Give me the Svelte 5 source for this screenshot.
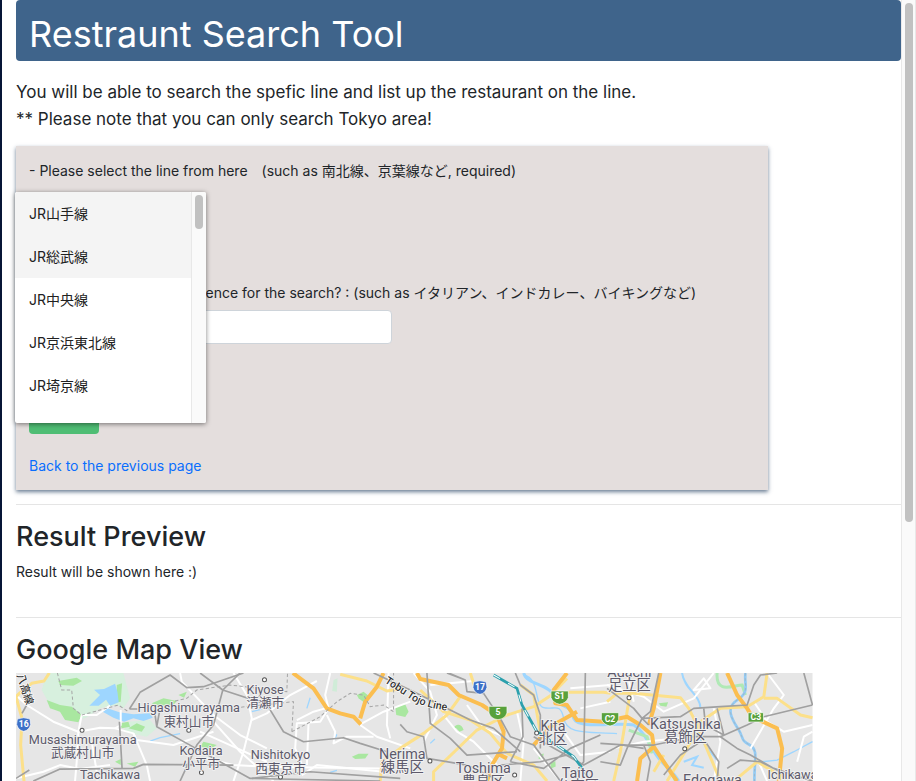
<script>
  const lines = [
    'JR山手線', 'JR総武線', 'JR中央線', 'JR京浜東北線', 'JR埼京線', 'JR横浜線', 'JR南武線',
    'JR青梅線', 'JR五日市線', 'JR八高線', 'JR常磐線', 'JR京葉線', 'JR武蔵野線', 'JR横須賀線',
    '東京メトロ銀座線', '東京メトロ丸ノ内線', '東京メトロ日比谷線', '東京メトロ東西線',
    '東京メトロ千代田線', '東京メトロ有楽町線', '東京メトロ半蔵門線', '東京メトロ南北線',
    '東京メトロ副都心線', '都営浅草線', '都営三田線', '都営新宿線', '都営大江戸線', '京王線',
    '小田急線', '東急東横線', '東急田園都市線', '西武新宿線', '西武池袋線', '東武東上線', '京成本線'
  ];
  let line = $state('');
  let keyword = $state('');

  const places = [
    { x: 248, y: 236, en: 'Musashimurayama', ja: '武蔵村山市', dot: [246, 196] },
    { x: 330, y: 342, en: 'Tachikawa', ja: '立川市', dot: [330, 400] },
    { x: 566, y: 142, en: 'Higashimurayama', ja: '東村山市', dot: [566, 196] },
    { x: 603, y: 269, en: 'Kodaira', ja: '小平市', dot: [604, 322] },
    { x: 795, y: 86, en: 'Kiyose', ja: '清瀬市', dot: [793, 44] },
    { x: 841, y: 283, en: 'Nishitokyo', ja: '西東京市', dot: [841, 336] },
    { x: 1206, y: 282, en: 'Nerima', ja: '練馬区', dot: [1289, 288], big: true },
    { x: 1449, y: 325, en: 'Toshima', ja: '豊島区', dot: [1543, 330], big: true },
    { x: 1658, y: 198, en: 'Kita', ja: '北区', dot: [1609, 204], big: true },
    { x: 1732, y: 338, en: 'Taito', ja: '台東区', dot: [1732, 420], big: true },
    { x: 1887, y: 36, en: 'Adachi', ja: '足立区', dot: [1886, 98], big: true },
    { x: 2055, y: 191, en: 'Katsushika', ja: '葛飾区', dot: [2053, 251], big: true },
    { x: 2136, y: 361, en: 'Edogawa', ja: '江戸川区', dot: [2136, 440], big: true },
    { x: 2376, y: 342, en: 'Ichikawa', ja: '市川市', dot: [2376, 420] }
  ];
</script>

<div class="page">
  <main>
    <header><h1>Restraunt Search Tool</h1></header>

    <p class="lead">
      You will be able to search the spefic line and list up the restaurant on the line.<br />
      ** Please note that you can only search Tokyo area!
    </p>

    <form class="card" onsubmit={(e) => e.preventDefault()}>
      <div class="field line-field">
        <label for="line">- Please select the line from here　(such as 南北線、京葉線など, required)</label>
        <div class="menu">
          <select id="line" size="5" bind:value={line} required>
            {#each lines as name, i}
              <option value={name} class:active={i < 2}>{name}</option>
            {/each}
          </select>
          <div class="track" aria-hidden="true"><div class="thumb short"></div></div>
        </div>
      </div>
      <div class="field">
        <label for="keyword">- Do you have some preference for the search? : (such as イタリアン、インドカレー、バイキングなど)</label>
        <input id="keyword" type="text" bind:value={keyword} />
      </div>
      <button type="submit">Search</button>
      <a href="#previous">Back to the previous page</a>
    </form>

    <section class="result">
      <h2>Result Preview</h2>
      <p>Result will be shown here :)</p>
    </section>

    <section>
      <h2>Google Map View</h2>
      <svg class="map" viewBox="48 24 2388 1350" role="img" aria-label="Map of Tokyo">
        <rect x="48" y="24" width="2388" height="1350" fill="#e6e6e6" />

        <g fill="#d7f0de">
          <path d="M140 24H370L390 100 370 130 350 120 300 130 255 160 215 165 150 120 125 75Z" />
          <path d="M385 170L450 165 470 190 440 215 370 200Z" />
        </g>
        <g fill="#a9e7a0">
          <path d="M175 48L230 38 246 48 220 62 180 60Z" />
          <path d="M350 60L366 55 362 110 350 112Z" />
          <path d="M140 105L180 120 215 125 245 150 235 172 195 165 180 140 150 130Z" />
          <path d="M455 115L490 100 530 108 520 120 470 122Z" />
          <path d="M535 90L560 80 552 98Z" />
          <path d="M360 175L385 170 390 185 365 190Z" />
          <path d="M385 190L410 175 435 185 425 200Z" />
          <path d="M345 290L362 282 362 300Z" />
          <path d="M380 295L415 290 405 305Z" />
          <path d="M610 230L650 240 630 252 600 244Z" />
          <path d="M1070 90L1090 80 1105 92 1095 115 1075 100Z" />
          <path d="M1185 125L1215 118 1225 140 1215 156 1188 150Z" />
          <path d="M1360 190C1365 175 1385 175 1390 195L1378 200 1368 190Z" />
          <path d="M1055 275L1075 266 1105 266 1095 280 1065 282Z" />
          <path d="M1000 45L1012 40 1010 80 996 78Z" fill="#d0ecd8" />
          <path d="M1615 270L1630 265 1628 280 1615 282Z" />
          <path d="M1650 296L1665 288 1666 304 1652 310Z" />
          <path d="M1975 115L2003 112 1998 125 1980 122Z" />
        </g>

        <g fill="#9ed6ff">
          <path d="M268 122L300 90 282 74 312 72 345 56 352 80 356 112 330 122 318 104 296 122Z" />
          <path d="M308 140L322 130 358 142 400 148 450 145 458 158 430 168 400 160 372 170 340 158Z" />
        </g>
        <g fill="none" stroke="#9ed6ff" stroke-width="4">
          <path d="M450 228L480 218 540 206" />
          <path d="M755 140L785 132M920 130L930 98M1000 230L1010 208M1290 235L1304 222M990 322L1010 316" />
          <path stroke-width="9" d="M1570 24C1580 60 1640 55 1660 90 1665 130 1710 110 1720 160 1735 195 1850 170 1900 180 1935 200 1950 250 1975 280 2000 310 2020 320 2035 348" />
          <path d="M1570 30C1620 40 1600 120 1630 128S1680 110 1690 160 1760 200 1850 206" />
          <path stroke-width="6" d="M2045 24C2050 70 2100 90 2100 130M2085 200C2110 240 2130 260 2150 285M2050 290L2090 275 2075 300 2110 308" />
          <path stroke-width="4" d="M2285 290L2330 285 2380 260 2436 230" />
        </g>
        <g fill="none" stroke="#b0e9b6" stroke-width="9">
          <path d="M2150 24C2145 90 2200 60 2225 60L2235 90" />
          <path d="M1990 290C2005 310 2020 330 2025 348" />
          <path d="M1885 195L1940 215 1955 265" />
        </g>
        <path d="M2235 24C2230 60 2250 80 2210 105 2170 130 2200 170 2215 195S2220 225 2248 240 2260 290 2262 348" fill="none" stroke="#93cbf5" stroke-width="8" />
        <path d="M2235 24C2230 60 2250 80 2210 105 2170 130 2200 170 2215 195S2220 225 2248 240 2260 290 2262 348" fill="none" stroke="#a4adb2" stroke-width="2" stroke-dasharray="8 7" />

        <g fill="none" stroke="#fff" stroke-width="6" stroke-linejoin="round">
          <path d="M48 90L80 120 160 170 235 200 300 188 345 190 400 205 410 225 520 240 640 200" />
          <path d="M362 135L362 180 345 190M235 200L245 150 290 150 330 122M235 200L230 290 225 348" />
          <path d="M400 205L440 300 450 348M48 340L130 320 180 300 240 312 330 300M275 230L290 320" />
          <path d="M540 24L545 50 640 150 720 210 800 250M600 200L690 240 800 290M700 348L730 260 755 160 740 90 700 24" />
          <path d="M640 170L720 260 820 348M755 165L800 145 870 90 950 48M620 280L700 300 800 305 1140 310" />
          <path d="M990 24L975 90 985 130 960 170 890 175 885 250 910 310M890 165L940 140 975 130M980 150L1005 200 1000 235 1040 215 1120 215M925 175L920 300" />
          <path d="M1080 178L1150 140 1230 110M1080 180L1130 215 1230 250M1165 24L1160 180 1170 220M905 330L950 300 1150 320" />
          <path d="M1240 24L1290 80 1310 150 1270 230M1290 60L1420 48M1330 150L1370 200 1420 230 1490 300M1400 120L1450 190 1500 210" />
          <path d="M1550 140L1570 230 1560 348M1600 250L1640 300 1680 348M1690 200L1740 270 1830 260M1710 70L1830 60M1740 130L1830 110" />
          <path d="M1820 60L1930 95 1990 140 2080 100 2140 24M1840 250L1930 230 2080 215M1880 24L1900 110" />
          <path d="M2080 75L2130 70 2110 40ZM2140 130L2160 230 2140 348M2260 110L2300 170 2350 200 2436 180M2300 24L2350 90 2320 130 2250 250M2390 290L2410 215 2436 200M2270 280L2300 348" />
        </g>

        <g fill="none" stroke="#fce08a" stroke-width="9" stroke-linejoin="round">
          <path d="M148 24L132 48 95 55 58 85 48 95M48 95L66 160 62 240 72 348" />
          <path d="M1020 28L1100 48 1160 78 1210 70" />
          <path d="M1140 348L1145 290 1200 250 1270 205 1340 150 1380 95" />
          <path d="M1260 75L1330 140 1410 165 1470 205 1520 265M1300 348L1300 320 1430 195 1520 150 1600 125 1650 92 1700 40M1410 24L1425 70M1700 82L1810 82 1830 85" />
          <path d="M1520 265L1600 300 1640 348M1560 60L1600 90 1620 200M1890 80L1860 260 1840 348" />
          <path d="M1820 110L1850 85 1900 85 2040 98 2065 130 2085 170 2160 348M2000 348L2060 250 2100 170 2160 130 2240 125 2290 95 2300 24M2290 100L2330 100 2400 150 2436 158" />
          <path d="M2200 348L2270 290 2320 320M1990 270L1960 320" />
        </g>
        <g fill="none" stroke="#fbbe50" stroke-width="12" stroke-linejoin="round">
          <path d="M878 24L940 70 980 130 1020 145 1060 155 1082 178M1080 160L1095 110 1130 65 1150 24" />
          <path d="M1250 24L1260 42 1345 60 1375 90 1445 120 1490 150 1510 200 1505 250 1475 300 1460 348M1490 265L1520 280" />
          <path d="M1700 24L1660 75 1665 115 1700 120 1730 165 1810 170 1880 155 1920 180 1955 210 1960 245 2010 320 2030 348M1730 140L1650 185 1600 240" />
          <path d="M1980 24L1960 130 1945 180M1960 245L1920 280 1910 348M2180 24L2210 90 2240 130 2255 155 2330 190 2345 250 2335 348" />
        </g>

        <g fill="none" stroke="#a0a0a0" stroke-width="5" stroke-linejoin="round">
          <path d="M388 132L420 82 510 30 560 68 610 65 730 24M388 132L412 132M48 340L88 315M80 120L66 145M100 348L180 312 400 310 430 298 700 300" />
          <path d="M358 170L366 310M465 150L470 185 560 235 750 340 1140 348M470 185L480 130" />
          <path d="M600 24L668 75 800 118 850 200 910 230 1030 218 1080 235 1160 260M668 75L640 180 590 240 540 348M668 75L720 24M755 340L930 320 1200 340" />
          <path d="M1120 24L1230 75 1410 165 1480 190 1560 260M1200 178L1220 200 1270 215 1280 280 1400 300 1500 348M1280 24L1290 175 1350 220 1400 270 1550 260" />
          <path d="M1340 24L1395 45 1400 80 1450 85 1500 160 1530 215 1600 240 1680 348M1345 24L1395 45" />
          <path d="M1545 24L1560 60 1600 90 1620 150 1620 250M1565 130L1568 215 1530 290M1755 24L1750 290 1730 320M1500 300L1620 290 1700 270 1750 300M1600 215L1750 300 1860 240 1930 250M1530 290L1630 310 1710 250 1800 210" />
          <path d="M1820 70L1900 130 1925 160 1945 180M1925 160L1880 250 1860 300 1800 290M1975 24L1950 140 1925 160 2040 155 2080 130 2160 125 2240 120 2260 60 2280 30 2330 24" />
          <path d="M1800 235L1880 240 1960 240 2080 215 2160 215 2240 180 2290 155 2436 120M2160 215L2210 250 2250 270 2320 310 2436 348M2110 130L2115 180 2170 210 2150 130M2115 230L2155 290 2150 348M2180 310L2220 285 2280 290 2340 320M1930 240L1950 290 1940 348M1990 330L2040 270 2100 230M2410 24L2436 120" />
        </g>
        <path d="M1480 30L1550 70 1565 120 1610 200 1720 275 1760 330" fill="none" stroke="#2ba0ad" stroke-width="8" />
        <path d="M1480 30L1550 70 1565 120 1610 200 1720 275 1760 330" fill="none" stroke="#fff" stroke-width="3" stroke-dasharray="22 28" />

        <g fill="none" stroke="#a5a5a5" stroke-width="3" stroke-dasharray="10 7">
          <path d="M172 24L185 75 215 75 220 130 245 150 300 135 355 120 385 140" />
          <path d="M525 108L560 100 590 75 690 60 860 80 862 24M875 200L880 110 690 130M875 200L960 155 1010 110 1050 85 1090 90 1110 125 1150 120 1180 140 1180 24" />
        </g>

        <g stroke="#fff" stroke-width="2">
          <path d="M52 162Q71 154 90 162L92 178Q88 196 71 199 54 196 50 178Z" fill="#3d70c8" />
          <path d="M1420 51Q1439 43 1458 51L1460 67Q1456 85 1439 88 1422 85 1418 67Z" fill="#3d70c8" />
          <path d="M1466 124H1520V144Q1514 162 1493 164 1472 162 1466 144Z" fill="#58a13c" />
          <path d="M1652 78H1704V98Q1698 114 1678 118 1658 114 1652 98Z" fill="#58a13c" />
          <path d="M1803 143H1855V163Q1849 179 1829 183 1809 179 1803 163Z" fill="#58a13c" />
          <path d="M2243 143H2289V171H2243Z" fill="#58a13c" />
        </g>
        <g class="shield">
          <text x="71" y="187">16</text>
          <text x="1439" y="76">17</text>
          <text x="1493" y="150">5</text>
          <text x="1678" y="103">S1</text>
          <text x="1829" y="170">C2</text>
          <text x="2266" y="166">C3</text>
        </g>

        <path id="tojo" d="M1152 52L1230 102Q1270 130 1370 141" fill="none" />
        <text class="rail"><textPath href="#tojo">Tobu Tojo Line</textPath></text>
        <text class="rail" transform="translate(50 30) rotate(72)">八高線</text>

        {#each places as p}
          <circle cx={p.dot[0]} cy={p.dot[1]} r="6" fill="#fff" stroke="#555" stroke-width="3" />
          <text class="place" class:big={p.big} x={p.x} y={p.y}>{p.en}</text>
          <text class="place" class:big={p.big} x={p.x} y={p.y + 40}>{p.ja}</text>
        {/each}
      </svg>
    </section>
  </main>
  <div class="track outer" aria-hidden="true"><div class="thumb long"></div></div>
</div>

<style>
  :global(body) {
    margin: 0;
  }
  .page {
    display: flex;
    box-sizing: border-box;
    height: 100vh;
    border-left: 2px solid #071536;
    background: #fff;
    color: #212529;
    font: 14px/21px Inter, 'Noto Sans CJK JP', sans-serif;
  }
  main {
    flex: 1;
    min-width: 0;
    overflow-y: auto;
    padding: 0 0 48px 14px;
    scrollbar-width: none;
  }
  .track {
    flex: none;
    box-sizing: border-box;
    width: 15px;
    padding: 3px;
    background: #fafafa;
    border-left: 1px solid #e8e8e8;
  }
  .outer {
    border-right: 1px solid #e8e8e8;
  }
  .thumb {
    width: 8px;
    border-radius: 4px;
    background: #c1c1c1;
  }
  .short {
    height: 15%;
  }
  .long {
    height: 67%;
  }
  header {
    padding: 10px 13px 3px;
    border-radius: 4px;
    background: #3f648b;
    color: #fff;
  }
  h1,
  h2,
  p {
    margin: 0;
  }
  h1 {
    font-size: 36px;
    line-height: 48px;
    font-weight: 400;
  }
  h2 {
    font-size: 27px;
    line-height: 34px;
    font-weight: 500;
  }
  .lead {
    padding: 18px 0 13px;
    font-size: 17px;
    line-height: 27px;
  }
  .card {
    display: flex;
    flex-direction: column;
    align-items: flex-start;
    box-sizing: border-box;
    width: 85%;
    padding: 14px 13px;
    background: #e4dedd;
    box-shadow: 0 2px 4px rgba(44, 71, 102, 0.7);
  }
  .field {
    display: flex;
    flex-direction: column;
    align-self: stretch;
    gap: 7px;
  }
  .line-field {
    position: relative;
    padding-bottom: 101px;
  }
  .menu {
    position: absolute;
    top: 32px;
    left: -14px;
    display: flex;
    width: 191px;
    height: 231px;
    overflow: hidden;
    box-shadow: 0 1px 5px rgba(0, 0, 0, 0.5);
    border-radius: 2px;
    background: #fff;
  }
  select {
    flex: 1;
    min-width: 0;
    margin-bottom: 2px;
    padding: 0;
    border: 0;
    outline: 0;
    overflow-y: scroll;
    scrollbar-width: none;
    background: #fff;
    color: #212121;
    font: inherit;
  }
  option {
    padding: 11px 14px;
    min-height: 21px;
    line-height: 21px;
  }
  option.active {
    background: #f4f4f4;
  }
  input {
    box-sizing: border-box;
    width: 50%;
    height: 34px;
    padding: 6px 12px;
    border: 1px solid #ced4da;
    border-radius: 4px;
    background: #fff;
    font: inherit;
  }
  button {
    width: 70px;
    height: 36px;
    margin: 54px 0 21px;
    border: 0;
    border-radius: 4px;
    background: #4fbd74;
    color: #fff;
    font: inherit;
  }
  a {
    color: #0a6efd;
    text-decoration: none;
  }
  section {
    border-top: 1px solid #e5e5e5;
    padding-top: 15px;
  }
  .result {
    margin-top: 14px;
    padding-bottom: 35px;
  }
  .result p {
    padding-top: 7px;
  }
  .map {
    display: block;
    width: 90%;
    margin-top: 6px;
  }
  text {
    font-family: Roboto, 'Noto Sans CJK JP', sans-serif;
  }
  .place {
    font-size: 38px;
    fill: #5d5a6b;
    stroke: #f2f2f2;
    stroke-width: 5px;
    paint-order: stroke;
    text-anchor: middle;
  }
  .big {
    font-size: 43px;
  }
  .shield text {
    font-size: 26px;
    font-weight: 700;
    fill: #fff;
    text-anchor: middle;
  }
  .rail {
    font-size: 32px;
    font-weight: 500;
    fill: #333;
    stroke: #fff;
    stroke-width: 4px;
    paint-order: stroke;
  }
</style>
